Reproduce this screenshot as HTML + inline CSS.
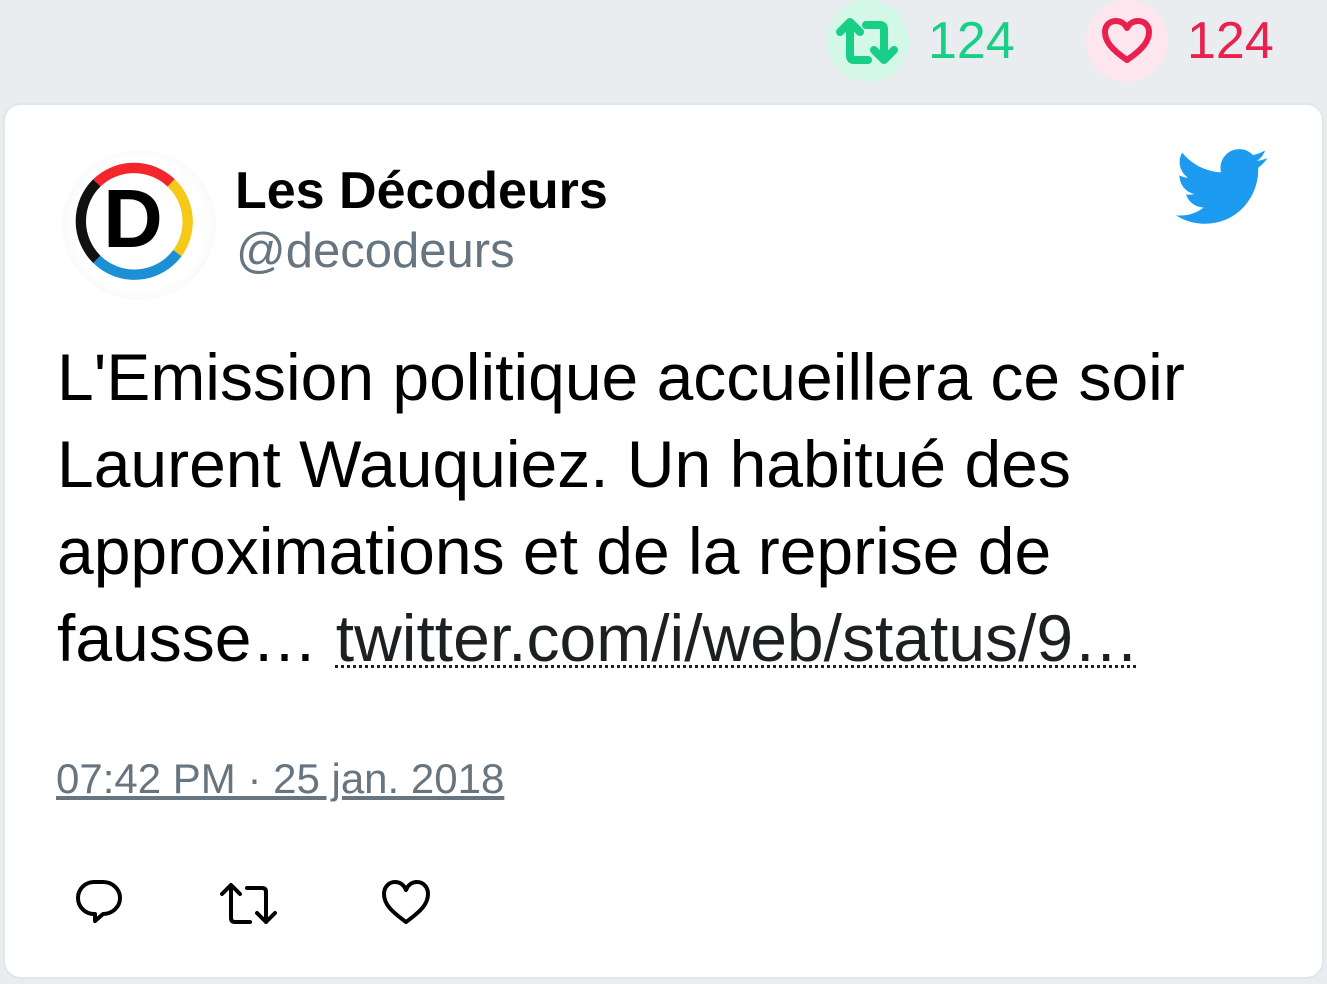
<!DOCTYPE html>
<html><head><meta charset="utf-8"><style>
*{margin:0;padding:0;box-sizing:border-box}
body{width:1327px;height:984px;background:#e9edf0;font-family:"Liberation Sans",sans-serif;position:relative;overflow:hidden}
.circ{position:absolute;border-radius:50%;width:82px;height:82px}
.num{position:absolute;top:13px;font-size:52px;line-height:56px}
.card{position:absolute;left:3px;top:103px;width:1321px;height:876px;background:#fff;border-radius:18px;border:2px solid #e3e6e8}
.abs{position:absolute}
</style></head><body>
<div class="circ" style="left:827px;top:0;background:#d3f8e8"></div>
<svg class="abs" style="left:836px;top:18px" width="64" height="48" viewBox="0 0 64 48" fill="none" stroke="#17cf86" stroke-width="8" stroke-linecap="round" stroke-linejoin="round"><path d="M4 14 L14 4 L24 14 M14 6 V38 Q14 42 18 42 H32 M30 7 H44 Q48 7 48 11 V42 M38 32 L48 42 L58 32"/></svg>
<div class="num" style="left:928px;color:#17cf86">124</div>
<div class="circ" style="left:1086px;top:0;background:#fde6ee"></div>
<svg class="abs" style="left:1101px;top:17px" width="52" height="48" viewBox="0 0 52 48"><path d="M26 43 C10 32 4 24 4 15 C4 8 9 4 15 4 C20 4 24 7 26 11 C28 7 32 4 37 4 C43 4 48 8 48 15 C48 24 42 32 26 43Z" fill="none" stroke="#e8214f" stroke-width="6" stroke-linejoin="round"/></svg>
<div class="num" style="left:1187px;color:#e8214f">124</div>
<div class="card"></div>
<div class="abs" style="left:62px;top:150px;width:154px;height:150px;border-radius:50%;background:radial-gradient(circle,#fff 60%,#ececec 100%)"></div>
<svg class="abs" style="left:72px;top:156px" width="124" height="124" viewBox="0 0 120 120" fill="none" stroke-width="10">
<path d="M24 26 A52 52 0 0 1 96 26" stroke="#f2262b"/>
<path d="M96 26 A52 52 0 0 1 102 94" stroke="#f5c917"/>
<path d="M102 94 A52 52 0 0 1 24 100" stroke="#1d8fd4"/>
<path d="M24 100 A52 52 0 0 1 24 26" stroke="#111"/>
<text x="59" y="88" font-family="Liberation Sans" font-weight="bold" font-size="80" fill="#000" stroke="none" text-anchor="middle">D</text>
</svg>
<div class="abs" style="left:235px;top:161px;font-size:52px;font-weight:bold;color:#000;line-height:60px">Les Décodeurs</div>
<div class="abs" style="left:236px;top:223px;font-size:49px;color:#66757f;line-height:56px">@decodeurs</div>
<svg class="abs" style="left:1172px;top:138px" width="97" height="97" viewBox="0 0 24 24"><path fill="#1d9bf0" d="M23.643 4.937c-.835.37-1.732.62-2.675.733.962-.576 1.7-1.49 2.048-2.578-.9.534-1.897.922-2.958 1.130-.85-.904-2.06-1.47-3.4-1.47-2.572 0-4.658 2.086-4.658 4.66 0 .364.042.718.12 1.06-3.873-.195-7.304-2.05-9.602-4.868-.4.69-.63 1.49-.63 2.342 0 1.616.823 3.043 2.072 3.878-.764-.025-1.482-.234-2.11-.583v.06c0 2.257 1.605 4.14 3.737 4.568-.392.106-.803.162-1.227.162-.3 0-.593-.028-.877-.082.593 1.85 2.313 3.198 4.352 3.234-1.595 1.25-3.604 1.995-5.786 1.995-.376 0-.747-.022-1.112-.065 2.062 1.323 4.51 2.093 7.14 2.093 8.57 0 13.255-7.098 13.255-13.254 0-.2-.005-.402-.014-.602.91-.658 1.7-1.477 2.323-2.41z"/></svg>
<div class="abs" style="left:57px;top:334px;width:1220px;font-size:66px;line-height:87px;color:#000">L'Emission politique accueillera ce soir Laurent Wauquiez. Un habitué des approximations et de la reprise de fausse… <span style="color:#1c2022;text-decoration:underline dotted 3px;text-underline-offset:4px">twitter.com/i/web/status/9…</span></div>
<div class="abs" style="left:56px;top:755px;font-size:42px;line-height:48px;color:#66757f;text-decoration:underline">07:42 PM · 25 jan. 2018</div>
<svg class="abs" style="left:74px;top:878px" width="52" height="52" viewBox="0 0 52 52" fill="none" stroke="#000" stroke-width="4" stroke-linejoin="round"><path d="M20 4 H29 A17 16 0 0 1 29 36 L21 43 V36 H20 A16 16 0 0 1 20 4Z"/></svg>
<svg class="abs" style="left:220px;top:882px" width="64" height="46" viewBox="0 0 64 46" fill="none" stroke="#000" stroke-width="4" stroke-linecap="round" stroke-linejoin="round"><path d="M2 12 L11 3 L20 12 M11 4 V36 Q11 40 15 40 H30 M27 6 H42 Q46 6 46 10 V40 M37 31 L46 40 L55 31"/></svg>
<svg class="abs" style="left:380px;top:879px" width="52" height="48" viewBox="0 0 52 48"><path d="M26 43 C11 32 4 25 4 15 C4 8 9 3 15 3 C20 3 24 6 26 11 C28 6 32 3 37 3 C43 3 48 8 48 15 C48 25 41 32 26 43Z" fill="none" stroke="#000" stroke-width="4" stroke-linejoin="round"/></svg>
</body></html>
